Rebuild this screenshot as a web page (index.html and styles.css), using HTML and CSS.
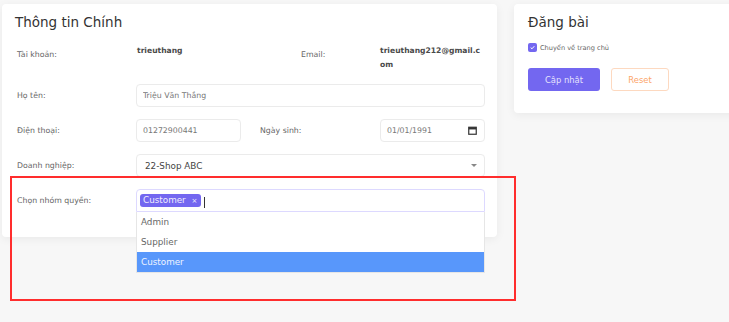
FILE: index.html
```html
<!DOCTYPE html>
<html lang="vi">
<head>
    <meta charset="UTF-8">
    <meta name="viewport" content="width=device-width, initial-scale=1.0">
    <title>Thông tin Chính</title>
    <link rel="stylesheet" href="styles.css">
</head>
<body>
    <div class="page">
        <div class="card main-card">
            <h2 class="card-title">Thông tin Chính</h2>
            <div class="form">
                <div class="row row-info">
                    <span class="label">Tài khoản:</span>
                    <span class="value value-user">trieuthang</span>
                    <span class="label label-email">Email:</span>
                    <span class="value value-email">trieuthang212@gmail.com</span>
                </div>
                <div class="row">
                    <label class="label" for="fullName">Họ tên:</label>
                    <input class="field" type="text" id="fullName" value="Triệu Văn Thắng">
                </div>
                <div class="row">
                    <label class="label" for="phone">Điện thoại:</label>
                    <input class="field field-half" type="text" id="phone" value="01272900441">
                    <label class="label label-birth" for="birth">Ngày sinh:</label>
                    <div class="field field-half date-field">
                        <span>01/01/1991</span>
                        <svg width="9" height="9" viewBox="0 0 9 9">
                            <rect x="0.75" y="1.25" width="7.5" height="7" fill="none" stroke="#333" stroke-width="1.2"/>
                            <rect x="0.75" y="1.25" width="7.5" height="2.2" fill="#333"/>
                        </svg>
                    </div>
                </div>
                <div class="row">
                    <span class="label">Doanh nghiệp:</span>
                    <div class="field select-field">
                        <span>22-Shop ABC</span>
                        <span class="arrow"></span>
                    </div>
                </div>
                <div class="row">
                    <span class="label">Chọn nhóm quyền:</span>
                    <div class="multi">
                        <div class="field multi-box">
                            <span class="tag">Customer <span class="tag-x">×</span></span>
                            <span class="caret"></span>
                        </div>
                        <ul class="options">
                            <li>Admin</li>
                            <li>Supplier</li>
                            <li class="active">Customer</li>
                        </ul>
                    </div>
                </div>
            </div>
        </div>
        <div class="card side-card">
            <h2 class="card-title">Đăng bài</h2>
            <label class="check">
                <span class="check-box">
                    <svg width="5" height="5" viewBox="0 0 5 5"><path d="M0.7 2.6 L2 3.8 L4.3 1.2" fill="none" stroke="#fff" stroke-width="1"/></svg>
                </span>
                Chuyển về trang chủ
            </label>
            <div class="actions">
                <button class="btn btn-primary">Cập nhật</button>
                <button class="btn btn-reset">Reset</button>
            </div>
        </div>
    </div>
    <div class="highlight"></div>
</body>
</html>
```

FILE: styles.css
```css
body {
    font-family: 'DejaVu Sans', sans-serif;
    background-color: #f7f7f7;
    margin: 0;
    padding: 0;
    overflow: hidden;
    height: 322px;
    position: relative;
}
.page {
    display: flex;
    align-items: flex-start;
    gap: 17px;
    padding: 4px 0 0 2px;
}
.card {
    background: #fff;
    border-radius: 4px;
    box-shadow: 0 2px 10px rgba(0, 0, 0, 0.06);
    box-sizing: border-box;
}
.main-card {
    width: 495px;
    flex-shrink: 0;
    padding: 9px 12px 25px 15px;
}
.side-card {
    width: 240px;
    flex-shrink: 0;
    height: 109px;
    padding: 9px 14px;
}
.card-title {
    margin: 0;
    font-size: 13.5px;
    line-height: 18px;
    font-weight: normal;
    color: #333;
}
.main-card .card-title {
    margin-left: -2px;
    margin-bottom: 13px;
}
.form {
    display: flex;
    flex-direction: column;
    gap: 12px;
}
.row {
    display: flex;
    align-items: center;
    height: 23px;
}
.row-info {
    height: 28px;
    align-items: flex-start;
}
.label {
    width: 119px;
    flex-shrink: 0;
    font-size: 7.8px;
    color: #666;
    line-height: 14px;
}
.row-info .label {
    padding-top: 4px;
}
.label-email {
    width: 79px;
}
.label-birth {
    width: 120px;
    margin-left: 19px;
}
.value {
    font-size: 7.6px;
    font-weight: bold;
    color: #4a4a4a;
    line-height: 14px;
}
.value-user {
    width: 164px;
    padding-left: 1px;
}
.value-email {
    width: 105px;
    word-break: break-all;
}
.field {
    box-sizing: border-box;
    height: 23px;
    width: 349px;
    border: 1px solid #ebebeb;
    border-radius: 4px;
    padding: 0 6px;
    font-family: inherit;
    font-size: 7.8px;
    color: #777;
    background: #fff;
    display: flex;
    align-items: center;
}
.field-half {
    width: 105px;
}
.date-field {
    justify-content: space-between;
    padding: 0 7px 0 6px;
}
.select-field {
    justify-content: space-between;
    font-size: 8.8px;
    color: #444;
    padding: 0 7px 0 8px;
}
.arrow {
    width: 0;
    height: 0;
    border-left: 3px solid transparent;
    border-right: 3px solid transparent;
    border-top: 3px solid #888;
}
.multi {
    position: relative;
    width: 349px;
}
.multi-box {
    width: 100%;
    border-color: #ddd9ff;
    border-radius: 4px 4px 0 0;
    padding: 0 3px;
    gap: 3px;
}
.tag {
    background: #7367f0;
    color: #f0eefe;
    border-radius: 3px;
    font-size: 8.8px;
    height: 13px;
    line-height: 13px;
    padding: 0 4px 0 3px;
}
.tag-x {
    font-size: 7px;
    margin-left: 3px;
}
.caret {
    width: 1px;
    height: 11px;
    background: #333;
    margin-top: 3px;
}
.options {
    position: absolute;
    top: 100%;
    left: 0;
    right: 0;
    margin: 0;
    padding: 0;
    list-style: none;
    background: #fff;
    border: 1px solid #e6e6e6;
    border-top: none;
    box-sizing: border-box;
    z-index: 2;
}
.options li {
    height: 20px;
    line-height: 20px;
    padding-left: 4px;
    font-size: 8.8px;
    color: #666;
}
.options li.active {
    background: #5897fb;
    color: #eef4ff;
}
.check {
    display: flex;
    align-items: center;
    gap: 3px;
    margin-top: 12px;
    font-size: 6.6px;
    color: #666;
}
.check-box {
    width: 9px;
    height: 9px;
    border-radius: 2px;
    background: #7367f0;
    display: flex;
    align-items: center;
    justify-content: center;
}
.actions {
    display: flex;
    gap: 11px;
    margin-top: 16px;
}
.btn {
    box-sizing: border-box;
    height: 23px;
    border-radius: 3px;
    font-family: inherit;
    font-size: 8.4px;
    cursor: pointer;
}
.btn-primary {
    width: 72px;
    background: #7367f0;
    border: none;
    color: #e6e3fd;
}
.btn-reset {
    width: 58px;
    background: #fff;
    border: 1px solid #fdd9c0;
    color: #fca56a;
}
.highlight {
    position: absolute;
    left: 10px;
    top: 176px;
    width: 506px;
    height: 125px;
    box-sizing: border-box;
    border: 2px solid #ff2d2d;
    pointer-events: none;
    z-index: 3;
}
```
